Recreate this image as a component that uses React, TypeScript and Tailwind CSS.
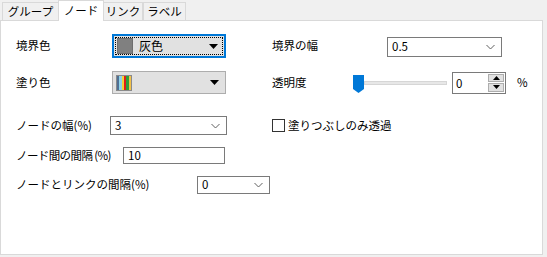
import React from "react";

const font = { fontFamily: '"Noto Sans CJK JP", "Noto Sans", sans-serif' };

function Arrow() {
    return (
        <svg width="9" height="5" viewBox="0 0 9 5" className="shrink-0">
            <polygon points="0,0 9,0 4.5,5" fill="#000" />
        </svg>
    );
}

function Chevron() {
    return (
        <svg width="9" height="6" viewBox="0 0 9 6" className="shrink-0">
            <polyline points="0.5,1 4.5,5 8.5,1" fill="none" stroke="#606060" strokeWidth="1" />
        </svg>
    );
}

function EditCombo({ value, w, h }: { value: string; w: string; h: string }) {
    return (
        <div className={`${w} ${h} flex shrink-0 items-center justify-between border border-[#7a7a7a] bg-white pl-[4px] pr-[6px]`}>
            <span className="leading-none">{value}</span>
            <Chevron />
        </div>
    );
}

function Tab({ label, active, w }: { label: string; active?: boolean; w: string }) {
    if (active) {
        return (
            <div className={`${w} relative z-10 -mx-[1px] -mb-px flex h-[21px] items-center justify-center border border-b-0 border-[#d9d9d9] bg-white`}>
                {label}
            </div>
        );
    }
    return (
        <div className={`${w} flex h-[18px] items-center justify-center border border-b-0 border-[#d9d9d9] bg-[#f0f0f0]`}>
            {label}
        </div>
    );
}

export default function App() {
    return (
        <div className="h-[257px] w-[547px] bg-[#f0f0f0] text-[11.5px] text-black" style={font}>
            <div className="flex h-[20px] items-end pl-[2px]">
                <Tab label="グループ" w="w-[57px]" />
                <Tab label="ノード" active w="w-[46px]" />
                <Tab label="リンク" w="w-[40px]" />
                <Tab label="ラベル" w="w-[43px]" />
            </div>
            <div className="flex h-[235px] w-[543px] flex-col whitespace-nowrap border border-[#d9d9d9] bg-white pl-[15px]">
                {/* row: 境界色 / 境界の幅 */}
                <div className="mt-[13px] flex h-[24px] items-center">
                    <div className="flex w-[256px] items-center">
                        <span className="w-[96px]">境界色</span>
                        <div className="flex h-[24px] w-[114px] items-center border-2 border-[#0078d7] bg-[#e1e1e1] p-[1px]">
                            <div className="flex h-full w-full items-center border border-dotted border-black pl-[1px] pr-[4px]">
                                <div className="h-[16px] w-[16px] border border-[#6e6e6e] bg-[#808080]" />
                                <span className="ml-[6px] flex-1 text-[12px]">灰色</span>
                                <Arrow />
                            </div>
                        </div>
                    </div>
                    <span className="w-[115px]">境界の幅</span>
                    <div className="mt-[2px]">
                        <EditCombo value="0.5" w="w-[115px]" h="h-[20px]" />
                    </div>
                </div>

                {/* row: 塗り色 / 透明度 */}
                <div className="mt-[13px] flex h-[23px] items-center">
                    <div className="flex w-[256px] items-center">
                        <span className="w-[96px]">塗り色</span>
                        <div className="flex h-[23px] w-[114px] items-center border border-[#adadad] bg-[#e1e1e1] pl-[3px] pr-[6px]">
                            <div className="flex h-[16px] w-[16px] border border-[#8a8a8a]">
                                <div className="flex-1 bg-[#4f6f94]" />
                                <div className="flex-1 bg-[#8fd3ea]" />
                                <div className="flex-1 bg-[#f3d23a]" />
                                <div className="flex-1 bg-[#e01b1b]" />
                                <div className="flex-1 bg-[#2e9e3a]" />
                                <div className="flex-1 bg-[#f2c24a]" />
                            </div>
                            <span className="flex-1" />
                            <Arrow />
                        </div>
                    </div>
                    <span className="w-[81px]">透明度</span>
                    <div className="relative flex h-[23px] w-[94px] items-center">
                        <div className="ml-[11px] h-[4px] flex-1 border border-[#d6d6d6] bg-[#e7e7e7]" />
                        <svg width="11" height="18" viewBox="0 0 11 18" className="absolute left-0 top-[4px]">
                            <polygon points="0,0 11,0 11,14 5.5,18 0,14" fill="#0078d7" />
                        </svg>
                    </div>
                    <div className="ml-[5px] flex h-[22px] w-[54px] border border-[#7a7a7a] bg-white">
                        <span className="flex-1 pl-[3px] leading-[20px]">0</span>
                        <div className="flex w-[18px] flex-col gap-[1px] p-[1px]">
                            <div className="flex flex-1 items-center justify-center border border-[#adadad] bg-[#e1e1e1]">
                                <svg width="7" height="4" viewBox="0 0 7 4">
                                    <polygon points="0,4 7,4 3.5,0" fill="#000" />
                                </svg>
                            </div>
                            <div className="flex flex-1 items-center justify-center border border-[#adadad] bg-[#e1e1e1]">
                                <svg width="7" height="4" viewBox="0 0 7 4">
                                    <polygon points="0,0 7,0 3.5,4" fill="#000" />
                                </svg>
                            </div>
                        </div>
                    </div>
                    <span className="ml-[11px]">%</span>
                </div>

                {/* row: ノードの幅 / checkbox */}
                <div className="mt-[22px] flex h-[19px] items-center">
                    <div className="flex w-[256px] items-center">
                        <span className="w-[94px] shrink-0">ノードの幅(%)</span>
                        <EditCombo value="3" w="w-[117px]" h="h-[19px]" />
                    </div>
                    <div className="h-[13px] w-[13px] border border-[#333]" />
                    <span className="ml-[3px]">塗りつぶしのみ透過</span>
                </div>

                {/* row: ノード間の間隔 */}
                <div className="mt-[12px] flex h-[17px] items-center">
                    <span className="w-[107px] shrink-0 tracking-[-0.6px]">ノード間の間隔 (%)</span>
                    <div className="flex h-[17px] w-[102px] items-center border border-[#7a7a7a] bg-white pl-[4px]">
                        <span className="leading-none">10</span>
                    </div>
                </div>

                {/* row: ノードとリンクの間隔 */}
                <div className="mt-[12px] flex h-[18px] items-center">
                    <span className="w-[181px] shrink-0">ノードとリンクの間隔(%)</span>
                    <EditCombo value="0" w="w-[73px]" h="h-[18px]" />
                </div>
            </div>
        </div>
    );
}
